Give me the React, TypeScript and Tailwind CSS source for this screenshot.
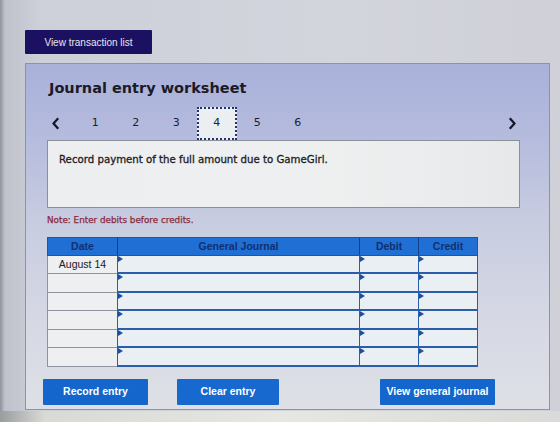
import React from "react";

const tabs = [1, 2, 3, 4, 5, 6];
const rows = [
  { date: "August 14", h: "h-[18px]" },
  { date: "", h: "h-[19px]" },
  { date: "", h: "h-[18px]" },
  { date: "", h: "h-[19px]" },
  { date: "", h: "h-[18px]" },
  { date: "", h: "h-[19px]" },
];

function Chevron({ dir }: { dir: "left" | "right" }) {
  return (
    <svg width="9" height="13" viewBox="0 0 9 13" className="block">
      <path
        d={dir === "left" ? "M6.5 2 L2.5 6.5 L6.5 11" : "M2.5 2 L6.5 6.5 L2.5 11"}
        fill="none"
        stroke="#15152a"
        strokeWidth="2.2"
        strokeLinecap="square"
      />
    </svg>
  );
}

function Marker() {
  return (
    <svg width="5" height="6" viewBox="0 0 5 6" className="absolute left-0 top-0">
      <path d="M0 0 L5 3 L0 6 Z" fill="#1b4f9f" />
    </svg>
  );
}

function InputCell({ w, last }: { w: string; last?: boolean }) {
  return (
    <div
      className={`relative ${w} h-full bg-[#e9eff2] border-l-[1.5px] border-[#2a5eaa] ${
        last ? "border-r-[1.5px]" : ""
      }`}
    >
      <Marker />
    </div>
  );
}

export default function App() {
  return (
    <div
      className="relative w-[560px] h-[422px] overflow-hidden bg-[linear-gradient(90deg,#8f9398_0px,#bfc2ca_5px,#cdd0d9_40px,#d3d5dd_60%,#cfd0d8_100%)] pl-[25px] pt-[30px]"
      style={{ fontFamily: '"DejaVu Sans", Verdana, sans-serif' }}
    >
      <button
        className="flex h-[24px] w-[127px] items-center justify-center rounded-[1px] bg-[#1b1160] text-[10px] text-[#e6e6f2]"
        style={{ fontFamily: '"Liberation Sans", Arial, sans-serif' }}
      >
        View transaction list
      </button>

      <div className="mt-[9px] h-[347px] w-[525px] border border-[#8d92a4] bg-[linear-gradient(180deg,#a9b1da_0px,#b4bbdd_70px,#c6cbe0_150px,#d6d9e4_260px,#dee0e6_100%)] pl-[21px] pt-[14px]">
        <div className="pl-[2px] text-[14.5px] leading-[20px] font-bold text-[#1b1b28]">
          Journal entry worksheet
        </div>

        {/* step navigation */}
        <div className="mt-[9px] flex h-[33px] w-[473px] items-center">
          <div className="flex w-[28px] items-center pl-[4px]">
            <Chevron dir="left" />
          </div>
          {tabs.map((t) => (
            <div
              key={t}
              className={`flex h-[33px] w-[40.5px] items-center justify-center text-[11px] text-[#1e1e2c] ${
                t === 4 ? "border-2 border-dotted border-[#24346a] bg-[#eceff2]" : ""
              }`}
            >
              {t}
            </div>
          ))}
          <div className="ml-auto pr-[3px]">
            <Chevron dir="right" />
          </div>
        </div>

        {/* prompt */}
        <div className="h-[68px] w-[473px] border border-[#8a8f9b] bg-[linear-gradient(90deg,#eceef0,#eef0f0_60%,#e6e8ea)] pl-[11px] pt-[11px] text-[10.2px] text-[#1c1c24] [-webkit-text-stroke:0.3px_#1c1c24]">
          Record payment of the full amount due to GameGirl.
        </div>

        <div className="mt-[6px] text-[8.8px] leading-[12px] text-[#8a2a3c] [-webkit-text-stroke:0.25px_#8a2a3c]">
          Note: Enter debits before credits.
        </div>

        {/* journal table */}
        <div
          className="mt-[11px] w-[431px]"
          style={{ fontFamily: '"Liberation Sans", Arial, sans-serif' }}
        >
          <div className="flex h-[19px] bg-[#1f6fd5] text-[10.5px] font-bold text-[#13306e] border border-[#1a56b0]">
            <div className="flex w-[70px] items-center justify-center border-r border-[#104089]">Date</div>
            <div className="flex w-[242px] items-center justify-center border-r border-[#104089]">General Journal</div>
            <div className="flex w-[59px] items-center justify-center border-r border-[#104089]">Debit</div>
            <div className="flex flex-1 items-center justify-center">Credit</div>
          </div>
          {rows.map((r, i) => (
            <div key={i} className={`flex ${r.h}`}>
              <div className="flex h-full w-[70px] items-center justify-center border-l border-b border-[#8e949e] bg-[#edeff0] text-[10.5px] text-[#1a1a1a]">
                {r.date}
              </div>
              <div className="flex h-full flex-1 border-b-2 border-[#2a5eaa]">
                <InputCell w="w-[242px]" />
                <InputCell w="w-[59px]" />
                <InputCell w="flex-1" last />
              </div>
            </div>
          ))}
        </div>

        {/* actions */}
        <div
          className="mt-[12px] -ml-[4px] flex items-center text-[10.5px] font-bold text-white"
          style={{ fontFamily: '"Liberation Sans", Arial, sans-serif' }}
        >
          <button className="h-[26px] w-[105px] rounded-[1px] bg-[#1466cc]">Record entry</button>
          <button className="ml-[29px] h-[26px] w-[102px] rounded-[1px] bg-[#1769cf]">Clear entry</button>
          <button className="ml-[101px] h-[26px] w-[115px] rounded-[1px] bg-[#1466cc]">View general journal</button>
        </div>
      </div>

      <div className="absolute left-0 right-0 bottom-0 h-[11px] bg-[linear-gradient(90deg,#9a9d9f,#d8dad6_8%,#e6e7e2_50%,#d9dbd8)]" />
    </div>
  );
}
